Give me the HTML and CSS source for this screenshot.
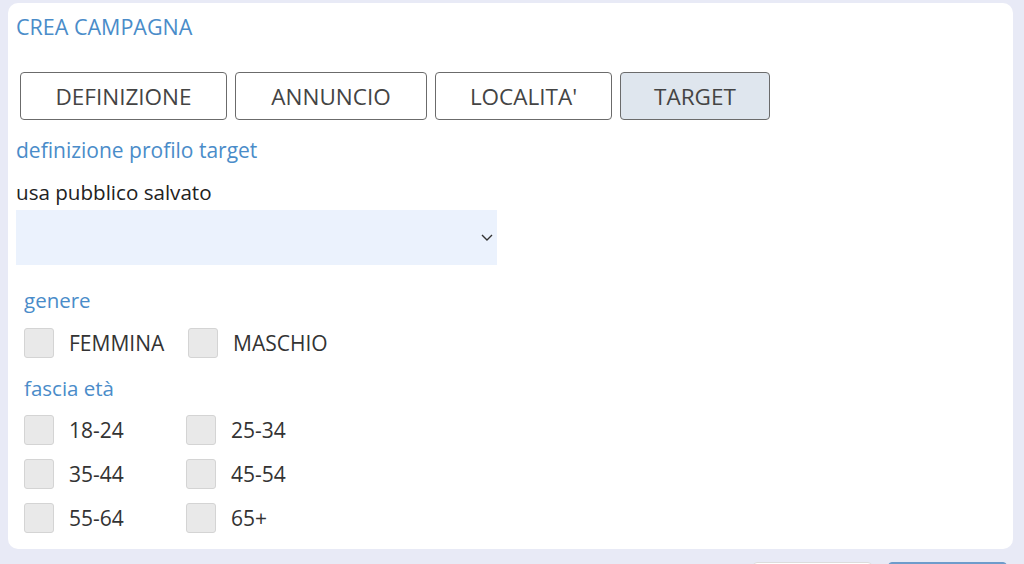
FILE: index.html
```html
<!DOCTYPE html>
<html lang="it">
<head>
<meta charset="utf-8">
<title>Crea campagna</title>
<link rel="stylesheet" href="styles.css">
</head>
<body>
<div class="card">
  <h1 class="title">CREA CAMPAGNA</h1>
  <div class="tabs">
    <button class="tab tab-def">DEFINIZIONE</button>
    <button class="tab tab-ann">ANNUNCIO</button>
    <button class="tab tab-loc">LOCALITA'</button>
    <button class="tab tab-tgt active">TARGET</button>
  </div>
  <h2 class="section">definizione profilo target</h2>
  <div class="label">usa pubblico salvato</div>
  <div class="select">
    <svg class="chev" width="12" height="7" viewBox="0 0 12 7"><path d="M1 1 L6 6 L11 1" fill="none" stroke="#333" stroke-width="1.4"/></svg>
  </div>
  <div class="group">
    <h3 class="group-title">genere</h3>
    <div class="grid grid-gender">
      <label class="check"><span class="box"></span>FEMMINA</label>
      <label class="check"><span class="box"></span>MASCHIO</label>
    </div>
    <h3 class="group-title">fascia età</h3>
    <div class="grid grid-age">
      <label class="check"><span class="box"></span>18-24</label>
      <label class="check"><span class="box"></span>25-34</label>
      <label class="check"><span class="box"></span>35-44</label>
      <label class="check"><span class="box"></span>45-54</label>
      <label class="check"><span class="box"></span>55-64</label>
      <label class="check"><span class="box"></span>65+</label>
    </div>
  </div>
</div>
<div class="footer">
  <button class="fbtn"></button>
  <button class="fbtn primary"></button>
</div>
</body>
</html>
```
FILE: styles.css
```css
* { box-sizing: border-box; }
html { height: 564px; overflow: hidden; }
html, body { margin: 0; padding: 0; }
body {
  background: #e8eaf6;
  font-family: "Open Sans", "Liberation Sans", sans-serif;
  color: #333;
  width: 1024px;
  height: 564px;
  overflow: hidden;
  padding-top: 3px;
}
.card {
  margin-left: 8px;
  width: 1005px;
  height: 546px;
  background: #fff;
  border-radius: 10px;
  padding: 9px 8px 0 8px;
}
.title {
  margin: 0;
  font-size: 21.5px;
  font-weight: 400;
  line-height: 30px;
  color: #4a8cc9;
}
.tabs {
  display: flex;
  gap: 8px;
  margin-top: 30px;
  padding-left: 4px;
}
.tab {
  height: 48px;
  padding: 0;
  border: 1.5px solid #6b6b6b;
  border-radius: 4px;
  background: #fff;
  font-family: inherit;
  font-size: 22.5px;
  color: #444;
}
.tab-def { width: 207px; }
.tab-ann { width: 192px; }
.tab-loc { width: 177px; }
.tab-tgt { width: 150px; }
.tab.active { background: #dfe6ee; }
.section {
  margin: 16px 0 0 0;
  font-size: 21px;
  font-weight: 400;
  line-height: 28px;
  color: #4a8cc9;
}
.label {
  margin-top: 14px;
  font-size: 20.6px;
  line-height: 28px;
  color: #222;
}
.select {
  margin-top: 4px;
  width: 481px;
  height: 55px;
  background: #ebf2fd;
  display: flex;
  align-items: center;
  justify-content: flex-end;
  padding-right: 4px;
}
.chev { display: block; }
.group { padding-left: 8px; }
.group-title {
  margin: 21px 0 0 0;
  font-size: 20.5px;
  font-weight: 400;
  line-height: 28px;
  color: #4a8cc9;
}
.grid {
  display: grid;
  grid-template-columns: 164px 164px;
  row-gap: 14px;
  margin-top: 14px;
}
.grid-age { grid-template-columns: 162px 162px; margin-top: 13px; }
.grid-gender + .group-title { margin-top: 16px; }
.check {
  display: flex;
  align-items: center;
  gap: 15px;
  height: 30px;
  font-size: 21px;
  color: #333;
}
.box {
  width: 30px;
  height: 30px;
  flex: none;
  background: #e9e9e9;
  border: 1px solid #d4d4d4;
  border-radius: 3px;
}
.footer {
  display: flex;
  justify-content: flex-end;
  gap: 16px;
  padding-right: 17px;
  margin-top: 13px;
  height: 2px;
  overflow: hidden;
}
.fbtn {
  flex: none;
  width: 119px;
  height: 40px;
  border: 1px solid #dcdcdc;
  border-radius: 4px;
  background: #fff;
}
.fbtn.primary { background: #6e9ccb; border-color: #6e9ccb; }
```
